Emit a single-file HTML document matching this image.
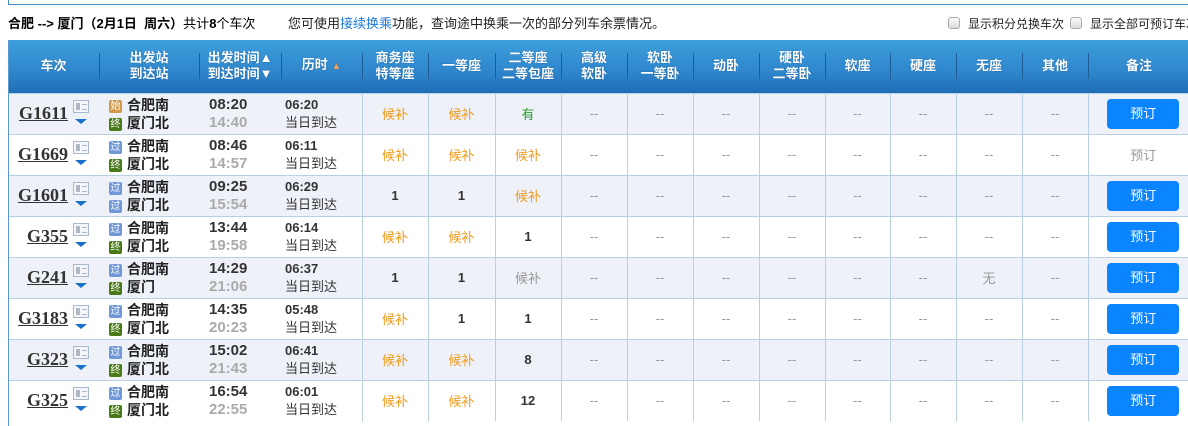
<!DOCTYPE html>
<html><head><meta charset="utf-8">
<style>
*{margin:0;padding:0;box-sizing:border-box}
body{width:1188px;height:426px;overflow:hidden;background:#fff;font-family:"Liberation Sans","Noto Sans CJK SC",sans-serif;font-size:12px;color:#333;position:relative}
.topline{position:absolute;left:8px;top:4px;width:1180px;height:1px;background:#3a8cc8}
.topline2{position:absolute;left:8px;top:0;width:1px;height:5px;background:#3a8cc8}
.sum{position:absolute;left:8px;top:13px;font-size:13px;color:#000;white-space:nowrap}
.sum b{font-weight:bold}
.tip{position:absolute;left:288px;top:13px;font-size:13px;color:#222;white-space:nowrap}
.tip a{color:#1a7ad8;text-decoration:none}
.cb{position:absolute;top:15px;font-size:12px;color:#222;white-space:nowrap}
.cb i{display:inline-block;width:12px;height:12px;border:1px solid #aaa;border-radius:3px;background:linear-gradient(#fafafa,#ddd);vertical-align:-1px;margin-right:8px}
table{position:absolute;left:8px;top:40px;border-collapse:collapse;table-layout:fixed;width:1194px}
th{height:53px;background:linear-gradient(#3d9fdc,#2f86cc 60%,#1f6eb7);color:#fff;font-weight:bold;font-size:13px;line-height:16px;text-align:center;position:relative;text-shadow:0 0 1px #14508a}
th:not(:first-child):before{content:"";position:absolute;left:0;top:13px;height:26px;width:1px;background:#1d5c96}
td{height:41px;border-top:1px solid #b9d0e0;text-align:center;font-size:13px;color:#999}
td.v{border-left:1px solid #b9d0e0}
tr.o td{background:#eef1f8}
.hb{color:#f09a1a}
.yes{color:#2a9a2a}
.n{color:#333;font-weight:bold}
.tn{text-align:right;padding-right:31px;position:relative}
.tn a{font-family:"Liberation Serif",serif;font-weight:bold;font-size:18px;color:#333;text-decoration:underline}
.card{position:absolute;left:65px;top:6px;width:16px;height:13px;border:1px solid #a8b8cc;background:#f4f6fa}
.card:before{content:"";position:absolute;left:2px;top:2px;width:4px;height:7px;background:#b0b8c6}
.card:after{content:"";position:absolute;left:8px;top:3px;width:5px;height:4px;border-top:1px solid #b0b8c6;border-bottom:1px solid #b0b8c6}
.tri{position:absolute;left:67px;top:25px;width:0;height:0;border-left:6px solid transparent;border-right:6px solid transparent;border-top:5px solid #1a70c8}
.st{text-align:left;padding-left:10px;color:#222;font-weight:bold;font-size:14px;line-height:18px}
.ic{display:inline-block;width:13px;height:13px;font-size:10px;line-height:13px;text-align:center;color:#fff;font-weight:normal;margin-right:5px;vertical-align:1px;border-radius:2px}
.s{background:#d29a4a}.g{background:#7097d6}.z{background:#4a7a18}
.tm{text-align:left;padding-left:10px;font-weight:bold;font-size:15px;line-height:18px;color:#333}
.tm span{color:#aaa}
.du{text-align:left;padding-left:4px;line-height:18px;color:#333}
.du b{font-size:13px}
.du span{font-size:13px}
.btn{display:inline-block;width:72px;height:30px;line-height:30px;background:#0a84ff;color:#fff;border-radius:4px;font-size:13px;margin-left:-4px}
.dis{color:#999;font-size:13px;margin-left:-4px}
</style></head><body>
<div class="topline"></div><div class="topline2"></div>
<div class="sum"><b>合肥 --&gt; 厦门（2月1日&nbsp; 周六）</b>共计<b>8</b>个车次</div>
<div class="tip">您可使用<a>接续换乘</a>功能，查询途中换乘一次的部分列车余票情况。</div>
<div class="cb" style="left:948px"><i></i>显示积分兑换车次</div>
<div class="cb" style="left:1070px"><i></i>显示全部可预订车次</div>
<table>
<colgroup><col style="width:91px"><col style="width:100px"><col style="width:82px"><col style="width:81px"><col style="width:66px"><col style="width:67px"><col style="width:66px"><col style="width:66px"><col style="width:66px"><col style="width:66px"><col style="width:66px"><col style="width:65px"><col style="width:66px"><col style="width:66px"><col style="width:66px"><col style="width:114px"></colgroup>
<tr><th>车次</th><th>出发站<br>到达站</th><th>出发时间▲<br>到达时间▼</th><th>历时 <span style="color:#f0a060;font-size:10px">▲</span></th><th>商务座<br>特等座</th><th>一等座</th><th>二等座<br>二等包座</th><th>高级<br>软卧</th><th>软卧<br>一等卧</th><th>动卧</th><th>硬卧<br>二等卧</th><th>软座</th><th>硬座</th><th>无座</th><th>其他</th><th><span style="margin-left:-12px">备注</span></th></tr>

<tr class="o"><td class="tn"><a>G1611</a><i class="card"></i><i class="tri"></i></td><td class="st"><span class="ic s">始</span>合肥南<br><span class="ic z">终</span>厦门北</td><td class="tm">08:20<br><span>14:40</span></td><td class="du"><b>06:20</b><br><span>当日到达</span></td><td class="v hb">候补</td><td class="v hb">候补</td><td class="v yes">有</td><td class="v">--</td><td class="v">--</td><td class="v">--</td><td class="v">--</td><td class="v">--</td><td class="v">--</td><td class="v">--</td><td class="v">--</td><td class="v"><span class="btn">预订</span></td></tr>

<tr><td class="tn"><a>G1669</a><i class="card"></i><i class="tri"></i></td><td class="st"><span class="ic g">过</span>合肥南<br><span class="ic z">终</span>厦门北</td><td class="tm">08:46<br><span>14:57</span></td><td class="du"><b>06:11</b><br><span>当日到达</span></td><td class="v hb">候补</td><td class="v hb">候补</td><td class="v hb">候补</td><td class="v">--</td><td class="v">--</td><td class="v">--</td><td class="v">--</td><td class="v">--</td><td class="v">--</td><td class="v">--</td><td class="v">--</td><td class="v"><span class="dis">预订</span></td></tr>

<tr class="o"><td class="tn"><a>G1601</a><i class="card"></i><i class="tri"></i></td><td class="st"><span class="ic g">过</span>合肥南<br><span class="ic g">过</span>厦门北</td><td class="tm">09:25<br><span>15:54</span></td><td class="du"><b>06:29</b><br><span>当日到达</span></td><td class="v n">1</td><td class="v n">1</td><td class="v hb">候补</td><td class="v">--</td><td class="v">--</td><td class="v">--</td><td class="v">--</td><td class="v">--</td><td class="v">--</td><td class="v">--</td><td class="v">--</td><td class="v"><span class="btn">预订</span></td></tr>

<tr><td class="tn"><a>G355</a><i class="card"></i><i class="tri"></i></td><td class="st"><span class="ic g">过</span>合肥南<br><span class="ic z">终</span>厦门北</td><td class="tm">13:44<br><span>19:58</span></td><td class="du"><b>06:14</b><br><span>当日到达</span></td><td class="v hb">候补</td><td class="v hb">候补</td><td class="v n">1</td><td class="v">--</td><td class="v">--</td><td class="v">--</td><td class="v">--</td><td class="v">--</td><td class="v">--</td><td class="v">--</td><td class="v">--</td><td class="v"><span class="btn">预订</span></td></tr>

<tr class="o"><td class="tn"><a>G241</a><i class="card"></i><i class="tri"></i></td><td class="st"><span class="ic g">过</span>合肥南<br><span class="ic z">终</span>厦门</td><td class="tm">14:29<br><span>21:06</span></td><td class="du"><b>06:37</b><br><span>当日到达</span></td><td class="v n">1</td><td class="v n">1</td><td class="v">候补</td><td class="v">--</td><td class="v">--</td><td class="v">--</td><td class="v">--</td><td class="v">--</td><td class="v">--</td><td class="v">无</td><td class="v">--</td><td class="v"><span class="btn">预订</span></td></tr>

<tr><td class="tn"><a>G3183</a><i class="card"></i><i class="tri"></i></td><td class="st"><span class="ic g">过</span>合肥南<br><span class="ic z">终</span>厦门北</td><td class="tm">14:35<br><span>20:23</span></td><td class="du"><b>05:48</b><br><span>当日到达</span></td><td class="v hb">候补</td><td class="v n">1</td><td class="v n">1</td><td class="v">--</td><td class="v">--</td><td class="v">--</td><td class="v">--</td><td class="v">--</td><td class="v">--</td><td class="v">--</td><td class="v">--</td><td class="v"><span class="btn">预订</span></td></tr>

<tr class="o"><td class="tn"><a>G323</a><i class="card"></i><i class="tri"></i></td><td class="st"><span class="ic g">过</span>合肥南<br><span class="ic z">终</span>厦门北</td><td class="tm">15:02<br><span>21:43</span></td><td class="du"><b>06:41</b><br><span>当日到达</span></td><td class="v hb">候补</td><td class="v hb">候补</td><td class="v n">8</td><td class="v">--</td><td class="v">--</td><td class="v">--</td><td class="v">--</td><td class="v">--</td><td class="v">--</td><td class="v">--</td><td class="v">--</td><td class="v"><span class="btn">预订</span></td></tr>

<tr><td class="tn"><a>G325</a><i class="card"></i><i class="tri"></i></td><td class="st"><span class="ic g">过</span>合肥南<br><span class="ic z">终</span>厦门北</td><td class="tm">16:54<br><span>22:55</span></td><td class="du"><b>06:01</b><br><span>当日到达</span></td><td class="v hb">候补</td><td class="v hb">候补</td><td class="v n">12</td><td class="v">--</td><td class="v">--</td><td class="v">--</td><td class="v">--</td><td class="v">--</td><td class="v">--</td><td class="v">--</td><td class="v">--</td><td class="v"><span class="btn">预订</span></td></tr>
</table>
<div style="position:absolute;left:8px;top:40px;width:1px;height:386px;background:#5a9ad0"></div>
</body></html>
